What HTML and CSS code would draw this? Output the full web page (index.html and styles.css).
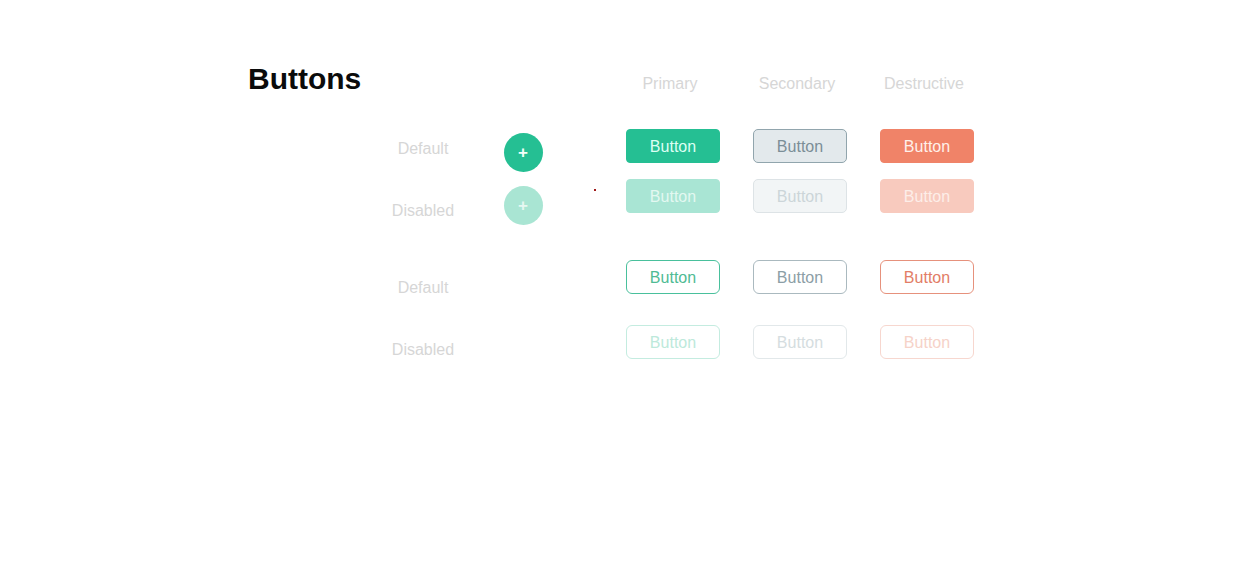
FILE: index.html
```html
<!DOCTYPE html>
<html lang="en">
<head>
<meta charset="utf-8">
<title>Buttons</title>
<link rel="stylesheet" href="styles.css">
</head>
<body>
<main class="page">
  <div class="title-col">
    <h1 class="title">Buttons</h1>
  </div>
  <div class="label-col">
    <span class="state state-1">Default</span>
    <span class="state state-2">Disabled</span>
    <span class="state state-3">Default</span>
    <span class="state state-4">Disabled</span>
  </div>
  <div class="fab-col">
    <button class="fab">+</button>
    <button class="fab fab-disabled">+</button>
    <span class="dot"></span>
  </div>
  <div class="matrix">
    <div class="row head-row">
      <span class="head">Primary</span>
      <span class="head">Secondary</span>
      <span class="head">Destructive</span>
    </div>
    <div class="filled">
      <div class="row">
        <button class="btn primary">Button</button>
        <button class="btn secondary">Button</button>
        <button class="btn destructive">Button</button>
      </div>
      <div class="row">
        <button class="btn primary disabled">Button</button>
        <button class="btn secondary disabled">Button</button>
        <button class="btn destructive disabled">Button</button>
      </div>
    </div>
    <div class="outlined">
      <div class="row">
        <button class="btn o-primary">Button</button>
        <button class="btn o-secondary">Button</button>
        <button class="btn o-destructive">Button</button>
      </div>
      <div class="row">
        <button class="btn o-primary disabled">Button</button>
        <button class="btn o-secondary disabled">Button</button>
        <button class="btn o-destructive disabled">Button</button>
      </div>
    </div>
  </div>
</main>
</body>
</html>
```
FILE: styles.css
```css
* { box-sizing: border-box; }
html, body { margin: 0; padding: 0; background: #fff; }
body {
  width: 1234px;
  height: 586px;
  font-family: "Liberation Sans", Arial, sans-serif;
  font-size: 16px;
}
.page {
  display: flex;
  align-items: flex-start;
  padding-left: 248px;
}
.title-col { width: 135px; }
.title {
  margin: 64px 0 0;
  font-size: 30px;
  line-height: 30px;
  font-weight: 700;
  color: #0b0b0b;
}
.label-col {
  width: 80px;
  display: flex;
  flex-direction: column;
  align-items: center;
  padding-top: 139px;
}
.state {
  line-height: 20px;
  color: #d6d6d6;
}
.state-2 { margin-top: 42px; }
.state-3 { margin-top: 57px; }
.state-4 { margin-top: 42px; }
.fab-col {
  position: relative;
  width: 120px;
  display: flex;
  flex-direction: column;
  align-items: center;
  gap: 14px;
  padding-top: 133px;
}
.fab {
  width: 39px;
  height: 39px;
  border: none;
  border-radius: 50%;
  background: #25bf93;
  color: #f2fffa;
  font-family: "Liberation Sans", Arial, sans-serif;
  font-size: 17px;
  font-weight: 700;
  line-height: 1;
  padding: 0 0 1px;
  display: flex;
  align-items: center;
  justify-content: center;
}
.fab-disabled { background: #a9e5d3; color: #e6f8f2; }
.dot {
  position: absolute;
  left: 131px;
  top: 189px;
  width: 2px;
  height: 2px;
  background: #a01818;
}
.matrix {
  margin-left: 43px;
  display: flex;
  flex-direction: column;
}
.row {
  display: flex;
  gap: 33px;
}
.head-row { margin-top: 74px; }
.head {
  width: 94px;
  padding-right: 6px;
  text-align: center;
  line-height: 20px;
  color: #d6d6d6;
}
.filled {
  margin-top: 35px;
  display: flex;
  flex-direction: column;
  gap: 16px;
}
.outlined {
  margin-top: 47px;
  display: flex;
  flex-direction: column;
  gap: 31px;
}
.btn {
  width: 94px;
  height: 34px;
  border: 1px solid transparent;
  border-radius: 4px;
  font-family: "Liberation Sans", Arial, sans-serif;
  font-size: 16px;
  background: #fff;
  padding: 1px 0 0;
  display: flex;
  align-items: center;
  justify-content: center;
}
.primary { background: #25bf93; border-color: #25bf93; color: #dcfff3; }
.primary.disabled { background: #a9e5d4; border-color: #a9e5d4; color: #e3f8f1; }
.secondary { background: #e3e9ec; border-color: #91a5ad; color: #7b8e97; border-radius: 5px; }
.secondary.disabled { background: #f2f5f6; border-color: #dde3e6; color: #ccd5d9; }
.destructive { background: #f08368; border-color: #f08368; color: #fff0ea; }
.destructive.disabled { background: #f8cabe; border-color: #f8cabe; color: #fdeee9; }
.o-primary { border-color: #49c09c; color: #4fbb94; border-radius: 6px; }
.o-primary.disabled { border-color: #c4ece0; color: #bde9db; }
.o-secondary { border-color: #aab9bf; color: #8c9ea6; border-radius: 6px; }
.o-secondary.disabled { border-color: #e2e8ea; color: #d5dde0; }
.o-destructive { border-color: #e6917c; color: #e27d66; border-radius: 6px; }
.o-destructive.disabled { border-color: #f7d7cf; color: #f6d2c8; }
```
